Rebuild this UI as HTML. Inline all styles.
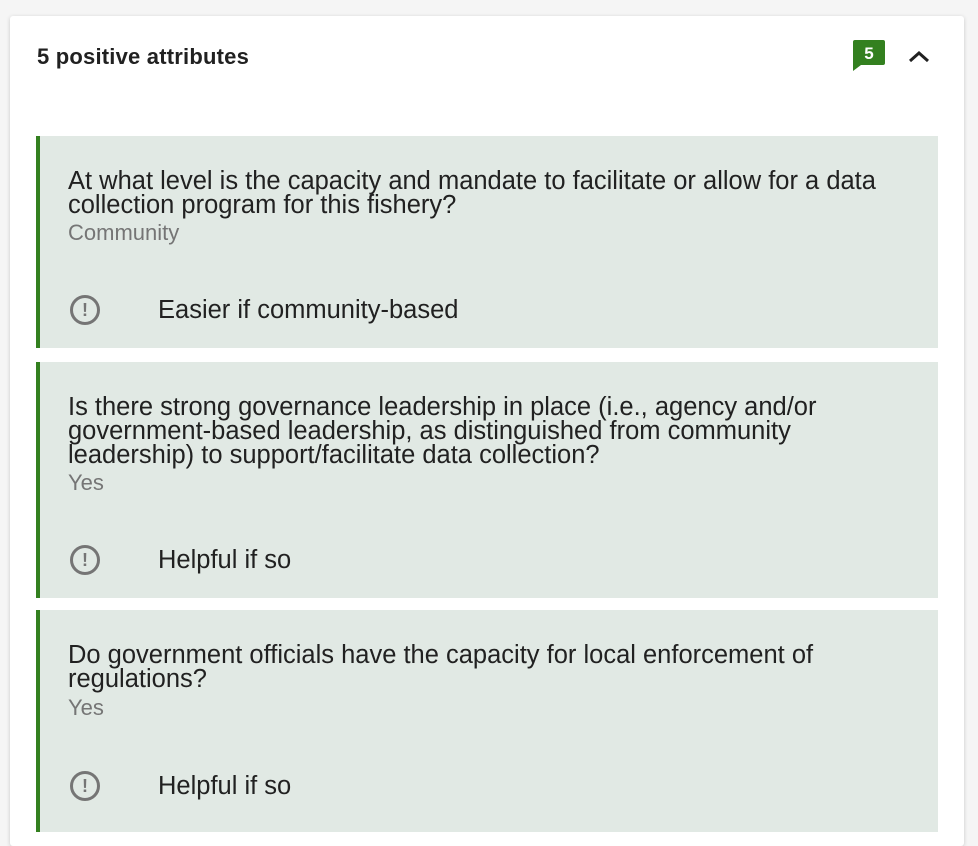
<!DOCTYPE html>
<html><head><style>
body{margin:0;width:978px;height:832px;background:#f5f5f5;overflow:hidden;font-family:"Liberation Sans",Arial,sans-serif;position:relative}
.card{position:absolute;left:10px;top:16px;width:954px;height:830px;background:#fff;box-shadow:0 1px 4px rgba(0,0,0,.18);border-radius:3px}
.h{position:absolute;left:37px;top:44px;font-size:22px;font-weight:bold;color:#212121;letter-spacing:0.2px}
.item{position:absolute;left:36px;width:898px;background:#e1e9e4;border-left:4px solid #33801f}
.q{position:absolute;left:28px;font-size:25.5px;line-height:24px;color:#212121;white-space:nowrap}
.a{position:absolute;left:28px;font-size:22px;color:#757575}
.ic{position:absolute;left:30px;width:24px;height:24px;border:3px solid #757575;border-radius:50%;color:#757575;font-weight:bold;font-size:18px;line-height:24px;text-align:center}
.t{position:absolute;left:118px;font-size:25.5px;color:#212121}
</style></head><body>
<div class="card"></div>
<div class="h">5 positive attributes</div>
<svg style="position:absolute;left:852px;top:39px" width="34" height="32"><path d="M3 1h28a2 2 0 0 1 2 2v21a2 2 0 0 1-2 2H9l-8 6V3a2 2 0 0 1 2-2z" fill="#33801f"/><text x="17" y="20" text-anchor="middle" font-family="Liberation Sans" font-weight="bold" font-size="17" fill="#fff">5</text></svg>
<svg style="position:absolute;left:908px;top:49px" width="22" height="16"><path d="M2 12l9-8 9 8" stroke="#212121" stroke-width="3" fill="none"/></svg>

<div class="item" style="top:136px;height:212px">
<div class="q" style="top:33px">At what level is the capacity and mandate to facilitate or allow for a data<br>collection program for this fishery?</div>
<div class="a" style="top:84px">Community</div>
<div class="ic" style="top:159px">!</div>
<div class="t" style="top:160px">Easier if community-based</div>
</div>
<div class="item" style="top:362px;height:236px">
<div class="q" style="top:33px">Is there strong governance leadership in place (i.e., agency and/or<br>government-based leadership, as distinguished from community<br>leadership) to support/facilitate data collection?</div>
<div class="a" style="top:108px">Yes</div>
<div class="ic" style="top:183px">!</div>
<div class="t" style="top:184px">Helpful if so</div>
</div>
<div class="item" style="top:610px;height:222px">
<div class="q" style="top:33px">Do government officials have the capacity for local enforcement of<br>regulations?</div>
<div class="a" style="top:85px">Yes</div>
<div class="ic" style="top:161px">!</div>
<div class="t" style="top:162px">Helpful if so</div>
</div>
</body></html>
